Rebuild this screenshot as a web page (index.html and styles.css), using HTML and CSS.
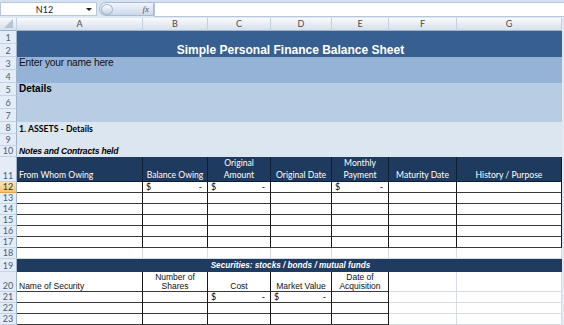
FILE: index.html
```html
<!DOCTYPE html>
<html>
<head>
<meta charset="utf-8">
<link rel="stylesheet" href="styles.css">
</head>
<body>
<div class="fbar">
  <div class="namebox"><span class="nb-text">N12</span><span class="nb-arrow"></span></div>
  <div class="fxpill"><span class="knob"></span><span class="fx">fx</span></div>
  <div class="finput"></div>
</div>
<div class="sheet">
  <div class="row h13 colhdr">
    <div class="corner"><svg width="9" height="9" viewBox="0 0 9 9"><polygon points="9,0 9,9 0,9" fill="#b4c3d6"/></svg></div>
    <div class="ch">A</div><div class="ch">B</div><div class="ch">C</div><div class="ch">D</div><div class="ch">E</div><div class="ch">F</div><div class="ch">G</div><div class="tail"></div>
  </div>
  <div class="row h13"><div class="rh">1</div><div class="band b-title"></div><div class="tail"></div></div>
  <div class="row h13"><div class="rh">2</div><div class="band b-title title">Simple Personal Finance Balance Sheet</div><div class="tail"></div></div>
  <div class="row h13"><div class="rh">3</div><div class="band b-name name">Enter your name here</div><div class="tail"></div></div>
  <div class="row h13"><div class="rh">4</div><div class="band b-name"></div><div class="tail"></div></div>
  <div class="row h13"><div class="rh">5</div><div class="band b-det details">Details</div><div class="tail"></div></div>
  <div class="row h13"><div class="rh">6</div><div class="band b-det"></div><div class="tail"></div></div>
  <div class="row h13"><div class="rh">7</div><div class="band b-det"></div><div class="tail"></div></div>
  <div class="row h12"><div class="rh">8</div><div class="band b-assets assets">1. ASSETS - Details</div><div class="tail"></div></div>
  <div class="row h12"><div class="rh">9</div><div class="band b-assets"></div><div class="tail"></div></div>
  <div class="row h11"><div class="rh">10</div><div class="band b-assets notes">Notes and Contracts held</div><div class="tail"></div></div>

  <div class="row h25">
    <div class="rh">11</div>
    <div class="th left">From Whom Owing</div>
    <div class="th">Balance Owing</div>
    <div class="th">Original<br>Amount</div>
    <div class="th">Original Date</div>
    <div class="th">Monthly<br>Payment</div>
    <div class="th">Maturity Date</div>
    <div class="th">History / Purpose</div>
    <div class="tail"></div>
  </div>
  <div class="row h11">
    <div class="rh sel">12</div>
    <div class="c t"></div>
    <div class="c t acct"><span>$</span><span>-</span></div>
    <div class="c t acct"><span>$</span><span>-</span></div>
    <div class="c t"></div>
    <div class="c t acct"><span>$</span><span>-</span></div>
    <div class="c t"></div>
    <div class="c t"></div>
    <div class="tail"></div>
  </div>
  <div class="row h11"><div class="rh">13</div><div class="c t"></div><div class="c t"></div><div class="c t"></div><div class="c t"></div><div class="c t"></div><div class="c t"></div><div class="c t"></div><div class="tail"></div></div>
  <div class="row h11"><div class="rh">14</div><div class="c t"></div><div class="c t"></div><div class="c t"></div><div class="c t"></div><div class="c t"></div><div class="c t"></div><div class="c t"></div><div class="tail"></div></div>
  <div class="row h11"><div class="rh">15</div><div class="c t"></div><div class="c t"></div><div class="c t"></div><div class="c t"></div><div class="c t"></div><div class="c t"></div><div class="c t"></div><div class="tail"></div></div>
  <div class="row h11"><div class="rh">16</div><div class="c t"></div><div class="c t"></div><div class="c t"></div><div class="c t"></div><div class="c t"></div><div class="c t"></div><div class="c t"></div><div class="tail"></div></div>
  <div class="row h11"><div class="rh">17</div><div class="c t"></div><div class="c t"></div><div class="c t"></div><div class="c t"></div><div class="c t"></div><div class="c t"></div><div class="c t"></div><div class="tail"></div></div>
  <div class="row h11"><div class="rh">18</div><div class="c"></div><div class="c"></div><div class="c"></div><div class="c"></div><div class="c"></div><div class="c"></div><div class="c"></div><div class="tail"></div></div>
  <div class="row h13"><div class="rh">19</div><div class="band b-sec sec">Securities: stocks / bonds / mutual funds</div><div class="tail"></div></div>
  <div class="row h20">
    <div class="rh">20</div>
    <div class="c t sh left">Name of Security</div>
    <div class="c t sh">Number of<br>Shares</div>
    <div class="c t sh">Cost</div>
    <div class="c t sh">Market Value</div>
    <div class="c t sh">Date of<br>Acquisition</div>
    <div class="c"></div>
    <div class="c"></div>
    <div class="tail"></div>
  </div>
  <div class="row h11">
    <div class="rh">21</div>
    <div class="c t"></div>
    <div class="c t"></div>
    <div class="c t acct"><span>$</span><span>-</span></div>
    <div class="c t acct"><span>$</span><span>-</span></div>
    <div class="c t"></div>
    <div class="c"></div>
    <div class="c"></div>
    <div class="tail"></div>
  </div>
  <div class="row h11"><div class="rh">22</div><div class="c t"></div><div class="c t"></div><div class="c t"></div><div class="c t"></div><div class="c t"></div><div class="c"></div><div class="c"></div><div class="tail"></div></div>
  <div class="row h11"><div class="rh">23</div><div class="c t"></div><div class="c t"></div><div class="c t"></div><div class="c t"></div><div class="c t"></div><div class="c"></div><div class="c"></div><div class="tail"></div></div>
</div>
</body>
</html>
```
FILE: styles.css
```css
* { box-sizing: border-box; }
html, body { margin: 0; padding: 0; }
body {
  width: 564px;
  height: 325px;
  overflow: hidden;
  background: #fff;
  font-family: "Liberation Sans", Arial, sans-serif;
  color: #000;
}

/* formula bar */
.fbar {
  display: flex;
  height: 18px;
  padding-top: 2px;
  background: linear-gradient(#d5e1f0, #dfe8f4);
}
.namebox {
  width: 97px;
  height: 14px;
  background: #fff;
  border: 1px solid #b7c7dc;
  display: flex;
  align-items: center;
}
.nb-text {
  flex: 1;
  text-align: center;
  font-family: Lato, "Liberation Sans", sans-serif;
  font-size: 9px;
  color: #222;
  padding-left: 2px;
}
.nb-arrow {
  width: 0;
  height: 0;
  margin-right: 4px;
  border-left: 3px solid transparent;
  border-right: 3px solid transparent;
  border-top: 3px solid #222;
}
.fxpill {
  width: 55px;
  height: 14px;
  margin-left: 2px;
  border: 1px solid #a8bbd3;
  border-radius: 7px 0 0 7px;
  background: linear-gradient(#f2f6fb, #cbd8ea);
  display: flex;
  align-items: center;
  justify-content: space-between;
  padding: 0 4px 0 1px;
}
.knob {
  width: 12px;
  height: 11px;
  border-radius: 50%;
  border: 1px solid #a3b6cf;
  background: linear-gradient(#fbfdff, #c5d4e7);
}
.fx {
  font-family: "Liberation Serif", serif;
  font-style: italic;
  font-size: 9px;
  color: #555;
}
.finput {
  flex: 1;
  height: 15px;
  background: #fff;
  border: 1px solid #b7c7dc;
  border-right: none;
}

/* sheet */
.sheet { width: 564px; }
.row {
  display: grid;
  grid-template-columns: 17px 126px 65px 63px 61px 57px 68px 105px 2px;
}
.h11 { height: 11px; }
.h12 { height: 12px; }
.h13 { height: 13px; }
.h20 { height: 20px; }
.h25 { height: 25px; }

.corner, .ch {
  background: linear-gradient(#f9fbfd, #e4eaf3 60%, #d6dfec);
  border-right: 1px solid #c4cfdd;
  border-bottom: 1px solid #9fb3cb;
}
.corner {
  display: flex;
  align-items: flex-end;
  justify-content: flex-end;
  padding: 0 3px 2px 0;
}
.ch {
  font-family: Lato, "Liberation Sans", sans-serif;
  font-size: 9px;
  color: #4a4a4a;
  text-align: center;
  line-height: 12px;
}
.tail { background: #e3e9f2; }

.rh {
  background: #e4ecf7;
  border-right: 1px solid #9fb3cb;
  border-bottom: 1px solid #c6d3e3;
  font-family: Lato, "Liberation Sans", sans-serif;
  font-size: 9px;
  color: #4b5d78;
  display: flex;
  align-items: flex-end;
  justify-content: center;
  line-height: 10px;
}
.rh.sel {
  background: linear-gradient(#fbe3b0, #f6c46b);
  border-bottom-color: #e0a44c;
  color: #333;
}

.band {
  grid-column: span 7;
  display: flex;
  align-items: flex-end;
  padding-left: 2px;
  white-space: nowrap;
}
.b-title { background: #376091; }
.b-name { background: #95b3d7; }
.b-det { background: #b8cce4; }
.b-assets { background: #dce6f1; }
.b-sec { background: #1f3b60; }

.title {
  justify-content: center;
  color: #fff;
  font-weight: bold;
  font-size: 12px;
  line-height: 13px;
}
.name {
  font-size: 10.2px;
  letter-spacing: -0.2px;
  line-height: 12px;
  color: #111;
  padding-bottom: 1px;
}
.details {
  font-weight: bold;
  font-size: 10px;
  line-height: 12px;
  padding-bottom: 1px;
}
.assets {
  font-family: Lato, "Liberation Sans", sans-serif;
  font-weight: bold;
  font-size: 8.7px;
  line-height: 11px;
}
.notes {
  font-weight: bold;
  font-style: italic;
  font-size: 8.6px;
  letter-spacing: -0.2px;
  line-height: 11px;
}
.sec {
  justify-content: center;
  color: #fff;
  font-weight: bold;
  font-style: italic;
  font-size: 8.2px;
  line-height: 12px;
}

.th {
  background: #1e3a5e;
  border-right: 1px solid #0f1f33;
  border-bottom: 1px solid #0f1f33;
  color: #fff;
  font-family: Lato, "Liberation Sans", sans-serif;
  font-size: 8.6px;
  line-height: 12px;
  display: flex;
  align-items: flex-end;
  justify-content: center;
  text-align: center;
  padding-bottom: 0;
  white-space: nowrap;
}
.th.left { justify-content: flex-start; padding-left: 2px; }

.c {
  background: #fff;
  border-right: 1px solid #d6dce4;
  border-bottom: 1px solid #d6dce4;
  display: flex;
  align-items: flex-end;
  white-space: nowrap;
}
.c.t {
  border-right-color: #1a1a1a;
  border-bottom-color: #3a3a3a;
}
.acct {
  justify-content: space-between;
  padding: 0 5px 0 3px;
  font-family: Lato, "Liberation Sans", sans-serif;
  font-size: 9px;
  line-height: 10px;
}
.sh {
  font-size: 8.5px;
  line-height: 9px;
  justify-content: center;
  text-align: center;
  color: #111;
}
.sh.left { justify-content: flex-start; padding-left: 2px; }
```
